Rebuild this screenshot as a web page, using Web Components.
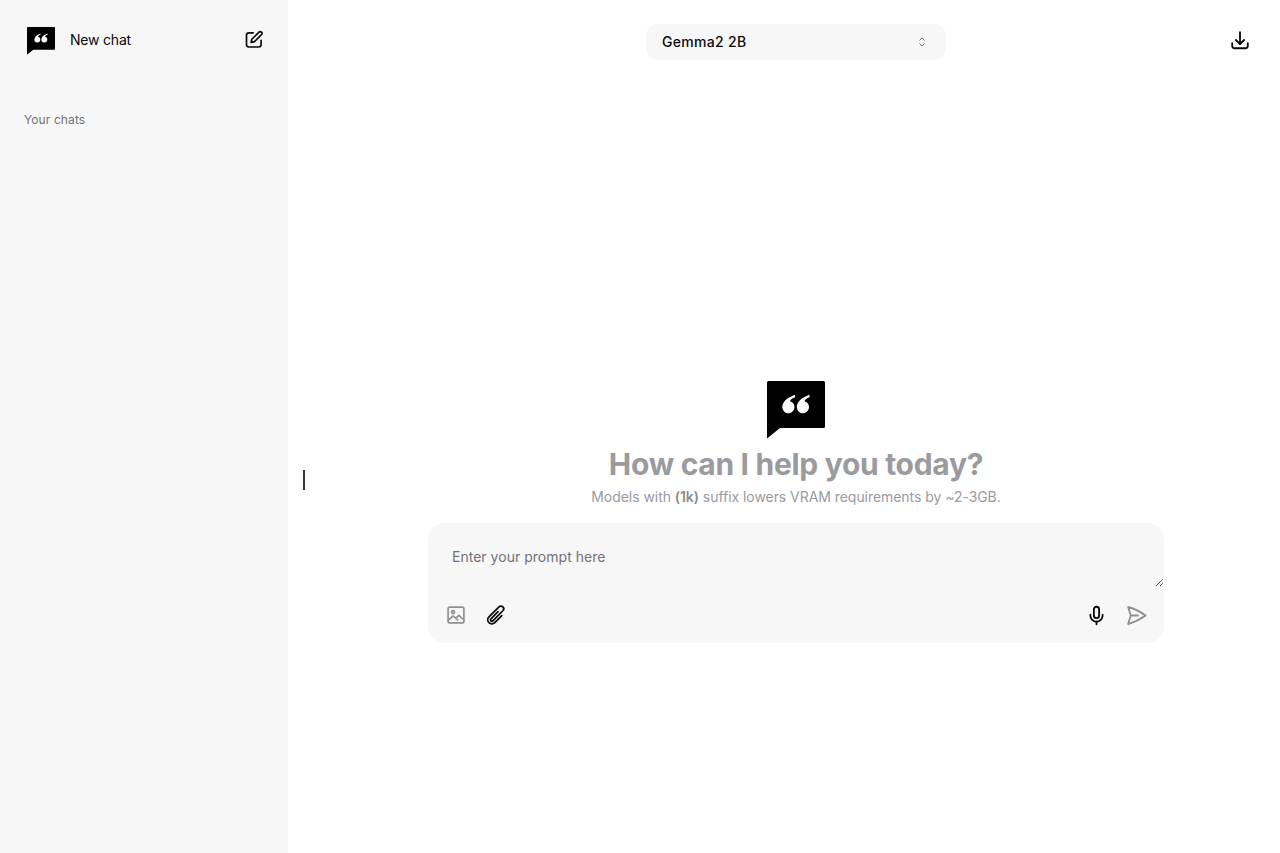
<!DOCTYPE html>
<html>
<head>
<meta charset="utf-8">
<title>New chat</title>
<style>
  html, body { margin: 0; height: 100%; background: #fff; }
  body { font-family: Inter, "Liberation Sans", sans-serif; color: #09090b; overflow: hidden; }
</style>
</head>
<body>
<chat-app></chat-app>

<script>
const LOGO = `
  <svg viewBox="0 0 58 58" width="100%" height="100%" aria-hidden="true">
    <path d="M1.500 0H56.500A1.500 1.500 0 0 1 58 1.500V45.500A1.500 1.500 0 0 1 56.500 47H13L0 57.500V1.500A1.500 1.500 0 0 1 1.500 0Z" fill="#000"/>
    <path fill="#fff" d="M28 13.700C20 16.500 15.300 21 15.300 26A6.100 6.100 0 1 0 23 20.200C23.300 18.500 25.300 17 28 16.200Z"/>
    <path fill="#fff" d="M42.500 13.700C34.500 16.500 29.800 21 29.800 26A6.100 6.100 0 1 0 37.500 20.200C37.800 18.500 39.800 17 42.500 16.200Z"/>
  </svg>`;

// petit composant pour le logo, réutilisé dans la barre et au centre
class ChatLogo extends HTMLElement {
  constructor() {
    super();
    this.attachShadow({ mode: 'open' }).innerHTML = `
      <style>
        :host { display: block; width: var(--logo-size, 28px); height: var(--logo-size, 28px); }
        svg { display: block; }
      </style>${LOGO}`;
  }
}
customElements.define('chat-logo', ChatLogo);

class IconButton extends HTMLElement {
  constructor() {
    super();
    this.attachShadow({ mode: 'open' }).innerHTML = `
      <style>
        :host { display: flex; align-items: center; justify-content: center; width: 24px; height: 24px; color: inherit; cursor: pointer; }
        ::slotted(svg) { display: block; }
      </style>
      <slot></slot>`;
  }
}
customElements.define('icon-button', IconButton);

class ChatSidebar extends HTMLElement {
  constructor() {
    super();
    this.attachShadow({ mode: 'open' }).innerHTML = `
      <style>
        :host { display: block; flex: none; width: 288px; height: 100%; background: #f7f7f7; box-sizing: border-box; padding: 27px 24px 0 27px; }
        .top { display: flex; align-items: center; height: 28px; }
        .new { flex: 1; margin-left: 15px; padding-bottom: 2px; font-size: 14px; line-height: 20px; color: #09090b; letter-spacing: -.2px; }
        .label { margin: 55px 0 0 -3px; font-size: 12px; line-height: 20px; color: #71717a; letter-spacing: .1px; }
        icon-button { width: 20px; height: 20px; padding-bottom: 3px; }
      </style>
      <div class="top">
        <chat-logo></chat-logo>
        <span class="new">New chat</span>
        <icon-button>
          <svg viewBox="0 0 24 24" width="23" height="23" fill="none" stroke="#09090b" stroke-width="2" stroke-linecap="round" stroke-linejoin="round">
            <path d="M20.500 13V18A3 3 0 0 1 17.500 21H6A3 3 0 0 1 3 18V7A3 3 0 0 1 6 4H11"/>
            <path d="M18.400 2.900A2.100 2.100 0 0 1 21.300 5.800L12.500 14.600L8.500 15.500L9.400 11.700Z"/>
          </svg>
        </icon-button>
      </div>
      <div class="label">Your chats</div>`;
  }
}
customElements.define('chat-sidebar', ChatSidebar);

class ModelSelect extends HTMLElement {
  constructor() {
    super();
    this.attachShadow({ mode: 'open' }).innerHTML = `
      <style>
        :host { display: flex; align-items: center; justify-content: space-between; width: 300px; height: 36px; box-sizing: border-box; padding: 0 16px 2px; background: #f7f7f7; border-radius: 12px; font-size: 14px; font-weight: 500; color: #09090b; letter-spacing: .3px; }
        svg { display: block; margin-top: 2px; }
      </style>
      <slot></slot>
      <svg viewBox="0 0 16 16" width="16" height="16" fill="none" stroke="#71717a" stroke-width="1" stroke-linecap="round" stroke-linejoin="round">
        <path d="M5.800 6.300L8 3.900L10.200 6.300"/><path d="M5.800 9.700L8 12.100L10.200 9.700"/>
      </svg>`;
  }
}
customElements.define('model-select', ModelSelect);

class PromptBox extends HTMLElement {
  constructor() {
    super();
    this.attachShadow({ mode: 'open' }).innerHTML = `
      <style>
        :host { display: block; width: 736px; height: 120px; background: #f7f7f7; border-radius: 16px; overflow: hidden; }
        .input { box-sizing: border-box; height: 64px; padding: 24px 24px 0; font-size: 14px; line-height: 20px; color: #71717a; letter-spacing: .02px; resize: vertical; overflow: hidden; }
        .tools { display: flex; align-items: center; justify-content: space-between; height: 56px; padding: 0 16px; }
        .group { display: flex; gap: 16px; }
        .dim { color: #909090; }
      </style>
      <div class="input">Enter your prompt here</div>
      <div class="tools">
        <div class="group">
          <icon-button class="dim">
            <svg viewBox="0 0 24 24" width="20" height="20" fill="none" stroke="currentColor" stroke-width="2" stroke-linecap="round" stroke-linejoin="round">
              <rect x="2.500" y="2.500" width="19" height="19" rx="2"/>
              <circle cx="8.500" cy="8.500" r="1.800"/>
              <path d="M2.500 18.500L8.500 13L14 18M12 15.800L15.500 12.500L21.500 18"/>
            </svg>
          </icon-button>
          <icon-button>
            <svg viewBox="0 0 24 24" width="22" height="22" fill="none" stroke="#09090b" stroke-width="1.900" stroke-linecap="round" stroke-linejoin="round">
              <path d="M18.375 12.739l-7.693 7.693a4.500 4.500 0 01-6.364-6.364l10.940-10.940A3 3 0 1119.500 7.372L8.552 18.320m.009-.010l-.010.010m5.699-9.941l-7.810 7.810a1.500 1.500 0 002.112 2.130"/>
            </svg>
          </icon-button>
        </div>
        <div class="group">
          <icon-button>
            <svg viewBox="0 0 24 24" width="21" height="21" fill="none" stroke="#09090b" stroke-width="2.100" stroke-linecap="round" stroke-linejoin="round">
              <rect x="9" y="2" width="6" height="13" rx="3"/>
              <path d="M5 11V12A7 7 0 0 0 19 12V11"/>
              <path d="M12 19V22"/>
            </svg>
          </icon-button>
          <icon-button class="dim">
            <svg viewBox="0 0 24 24" width="23" height="23" fill="none" stroke="currentColor" stroke-width="1.900" stroke-linecap="round" stroke-linejoin="round">
              <path d="M6 12L3.269 3.126A59.768 59.768 0 0121.485 12 59.770 59.770 0 013.270 20.876L5.999 12zm0 0h7.500"/>
            </svg>
          </icon-button>
        </div>
      </div>`;
  }
}
customElements.define('prompt-box', PromptBox);

class ChatApp extends HTMLElement {
  constructor() {
    super();
    this.attachShadow({ mode: 'open' }).innerHTML = `
      <style>
        :host { display: flex; height: 853px; }
        .handle { flex: none; width: 24px; position: relative; }
        .bar { position: absolute; left: 15px; top: 470px; width: 2px; height: 20px; background: #333; }
        .main { flex: 1; min-width: 0; display: flex; flex-direction: column; align-items: center; }
        .head { align-self: stretch; position: relative; display: flex; justify-content: center; padding-top: 24px; height: 36px; }
        .dl { position: absolute; right: 28px; top: 28px; }
        .hello { margin-top: 321px; display: flex; flex-direction: column; align-items: center; }
        chat-logo { --logo-size: 58px; }
        h1 { margin: 5px 0 0; font-size: 30px; line-height: 40px; font-weight: 700; color: #9a9a9f; letter-spacing: -.3px; }
        p { margin: 3px 0 16px; font-size: 14px; line-height: 20px; color: #9a9a9f; letter-spacing: -.05px; }
        b { font-weight: 600; color: #8a8a8f; }
      </style>
      <chat-sidebar></chat-sidebar>
      <div class="handle"><div class="bar"></div></div>
      <div class="main">
        <div class="head">
          <model-select>Gemma2 2B</model-select>
          <icon-button class="dl">
            <svg viewBox="0 0 24 24" width="22" height="22" fill="none" stroke="#09090b" stroke-width="2" stroke-linecap="round" stroke-linejoin="round">
              <path d="M3.500 15.500v3A2.500 2.500 0 006 21h12a2.500 2.500 0 002.500-2.500v-3"/>
              <path d="M16.500 12L12 16.500 7.500 12"/><path d="M12 16.500V3.500"/>
            </svg>
          </icon-button>
        </div>
        <div class="hello">
          <chat-logo></chat-logo>
          <h1>How can I help you today?</h1>
          <p>Models with <b>(1k)</b> suffix lowers VRAM requirements by ~2-3GB.</p>
          <prompt-box></prompt-box>
        </div>
      </div>`;
  }
}
customElements.define('chat-app', ChatApp);
</script>
</body>
</html>
